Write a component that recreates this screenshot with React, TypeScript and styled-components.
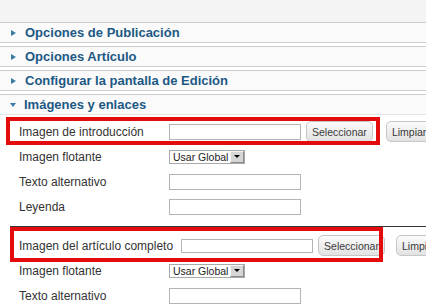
import React from "react";
import styled, { createGlobalStyle } from "styled-components";

const GlobalStyle = createGlobalStyle`
  html, body {
    margin: 0;
    padding: 0;
    background: #ffffff;
  }
  body {
    font-family: "Liberation Sans", Arial, sans-serif;
    overflow: hidden;
  }
`;

const panels = [
  "Opciones de Publicación",
  "Opciones Artículo",
  "Configurar la pantalla de Edición",
];

const App = () => (
  <Page>
    <GlobalStyle />
    <TopBand />
    {panels.map(title => (
      <Toggler key={title}>
        <Arrow />
        {title}
      </Toggler>
    ))}
    <Toggler $open>
      <Arrow $open />
      Imágenes y enlaces
    </Toggler>
    <Content>
      <Row>
        <Label>Imagen de introducción</Label>
        <TextInput />
        <Button>Seleccionar</Button>
        <Button $gap={13}>Limpiar</Button>
      </Row>
      <Row>
        <Label>Imagen flotante</Label>
        <Select>
          Usar Global
          <SelectArrow />
        </Select>
      </Row>
      <Row>
        <Label>Texto alternativo</Label>
        <TextInput />
      </Row>
      <Row>
        <Label>Leyenda</Label>
        <TextInput />
      </Row>
      <Spacer />
      <Row>
        <Label $wide>Imagen del artículo completo</Label>
        <TextInput $short />
        <Button>Seleccionar</Button>
        <Button $gap={11}>Limpiar</Button>
      </Row>
      <Row>
        <Label>Imagen flotante</Label>
        <Select>
          Usar Global
          <SelectArrow />
        </Select>
      </Row>
      <Row>
        <Label>Texto alternativo</Label>
        <TextInput />
      </Row>

      <Highlight $top={2} $left={6} $width={374} $height={28} />
      <Highlight $top={112} $left={10} $width={373} $height={35} />
    </Content>
  </Page>
);

// Styles

const Page = styled.div`
  width: 426px;
  height: 308px;
  overflow: hidden;
`;

const TopBand = styled.div`
  height: 22px;
  background: #f4f4f4;
`;

const Toggler = styled.div<{ $open?: boolean }>`
  display: flex;
  align-items: center;
  height: 19px;
  padding-left: 11px;
  margin-bottom: ${p => (p.$open ? 0 : 3)}px;
  border-top: 1px solid #cdcdcd;
  border-bottom: 1px solid ${p => (p.$open ? "#e4e4e4" : "#cdcdcd")};
  background: #fafafa;
  color: #1c5884;
  font-size: 13px;
  font-weight: bold;
  white-space: nowrap;
`;

const Arrow = styled.span<{ $open?: boolean }>`
  width: 0;
  height: 0;
  margin-right: ${p => (p.$open ? 8 : 9)}px;
  margin-left: ${p => (p.$open ? -1 : 0)}px;
  ${p =>
    p.$open
      ? `
    border-left: 3px solid transparent;
    border-right: 3px solid transparent;
    border-top: 4px solid #3b78a6;
  `
      : `
    border-top: 3.5px solid transparent;
    border-bottom: 3.5px solid transparent;
    border-left: 5px solid #3b78a6;
  `}
`;

const Content = styled.div`
  position: relative;
  padding: 4px 0 0 19px;
`;

const Row = styled.div`
  display: flex;
  align-items: center;
  height: 25px;
  white-space: nowrap;

  & > * {
    flex-shrink: 0;
  }
`;

const Label = styled.span<{ $wide?: boolean }>`
  min-width: 145px;
  margin-right: ${p => (p.$wide ? 8 : 5)}px;
  font-size: 12px;
  color: #333333;
`;

const TextInput = styled.span<{ $short?: boolean }>`
  box-sizing: border-box;
  width: 132px;
  height: ${p => (p.$short ? 14 : 16)}px;
  border: 1px solid #b4b4b4;
  background: #ffffff;
`;

const Button = styled.span<{ $gap?: number }>`
  box-sizing: border-box;
  display: inline-flex;
  align-items: center;
  height: 21px;
  padding: 0 5px;
  margin-left: ${p => p.$gap ?? 5}px;
  border: 1px solid #c6c6c6;
  border-radius: 5px;
  background: linear-gradient(#fbfbfb, #e2e2e2);
  font-size: 10.5px;
  color: #3a3a3a;
`;

const Select = styled.span`
  box-sizing: border-box;
  display: inline-flex;
  align-items: center;
  justify-content: space-between;
  width: 76px;
  height: 14px;
  padding-left: 3px;
  border: 1px solid #a9a9a9;
  background: #ffffff;
  font-size: 10.5px;
  color: #222222;
`;

const SelectArrow = styled.span`
  box-sizing: border-box;
  display: flex;
  align-items: center;
  justify-content: center;
  width: 14px;
  height: 12px;
  border: 1px solid;
  border-color: #f4f4f4 #8a8a8a #8a8a8a #f4f4f4;
  background: #d6d6d6;

  &::after {
    content: "";
    border-left: 3px solid transparent;
    border-right: 3px solid transparent;
    border-top: 3px solid #000000;
  }
`;

const Spacer = styled.div`
  height: 1px;
  margin: 7px 0 6px -9px;
  background: #333333;
`;

const Highlight = styled.div<{
  $top: number;
  $left: number;
  $width: number;
  $height: number;
}>`
  position: absolute;
  box-sizing: border-box;
  top: ${p => p.$top}px;
  left: ${p => p.$left}px;
  width: ${p => p.$width}px;
  height: ${p => p.$height}px;
  border: 4px solid #e30b0b;
`;

// Export

export default App;
